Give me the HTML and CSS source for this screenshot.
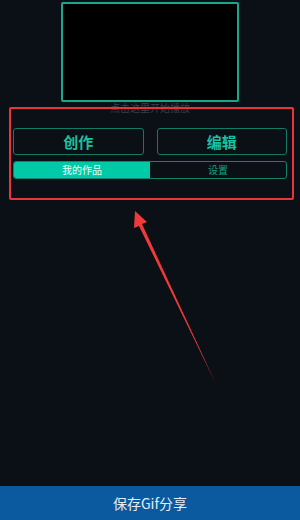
FILE: index.html
```html
<!DOCTYPE html>
<html>
<head>
<meta charset="utf-8">
<link rel="stylesheet" href="styles.css">
</head>
<body>
<div class="app">
  <main class="main">
    <div class="player"></div>
    <div class="caption">点击这里开始播放</div>
    <div class="actions">
      <button class="act">创作</button>
      <button class="act">编辑</button>
    </div>
    <div class="tabs">
      <div class="tab active">我的作品</div>
      <div class="tab">设置</div>
    </div>
    <div class="highlight"></div>
    <svg class="arrow" width="300" height="400" viewBox="0 0 300 400">
      <polygon points="135,211 147,222 142,224 216,384 139,226 134,228" fill="#f03a3a"/>
    </svg>
  </main>
  <footer class="footer">保存Gif分享</footer>
</div>
</body>
</html>
```
FILE: styles.css
```css
* { box-sizing: border-box; }
html, body { margin: 0; padding: 0; }
body {
  background: #0b0f16;
  font-family: "Noto Sans CJK SC", "Noto Sans", sans-serif;
}
.app {
  width: 300px;
  height: 520px;
  display: flex;
  flex-direction: column;
}
.main {
  flex: 1;
  position: relative;
  display: flex;
  flex-direction: column;
}
.player {
  width: 178px;
  height: 100px;
  margin: 2px 0 0 61px;
  background: #000;
  border: 2px solid #17a88c;
  border-radius: 2px;
}
.caption {
  text-align: center;
  font-size: 10px;
  line-height: 12px;
  height: 12px;
  color: #3a4047;
  margin-top: 0;
}
.actions {
  display: grid;
  grid-template-columns: 1fr 1fr;
  gap: 13px;
  padding: 0 13px;
  margin-top: 14px;
}
.act {
  height: 27px;
  background: transparent;
  border: 1.5px solid #127a68;
  border-radius: 3px;
  color: #16c2a0;
  font-family: inherit;
  font-size: 15px;
  font-weight: bold;
  padding: 0;
  line-height: 1;
}
.tabs {
  display: grid;
  grid-template-columns: 1fr 1fr;
  margin: 6px 13px 0;
  height: 18px;
  border: 1px solid #12836e;
  border-radius: 3px;
  overflow: hidden;
}
.tab {
  font-size: 10px;
  line-height: 16px;
  text-align: center;
  color: #14a48a;
}
.tab.active {
  background: #00c9a8;
  color: #e8fff9;
}
.highlight {
  position: absolute;
  left: 9px;
  top: 107px;
  width: 285px;
  height: 93px;
  border: 2px solid #e8353a;
  border-radius: 2px;
}
.arrow {
  position: absolute;
  left: 0;
  top: 0;
}
.footer {
  height: 34px;
  background: #0b5aa0;
  color: #e4edf6;
  font-size: 14px;
  text-align: center;
  line-height: 34px;
}
```
